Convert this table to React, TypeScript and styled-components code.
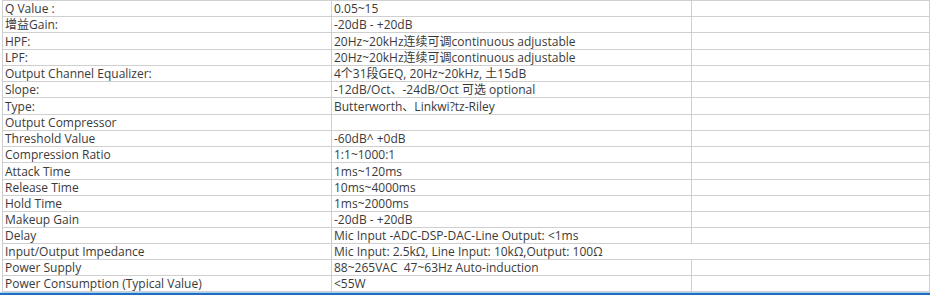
import React from "react";
import styled, { createGlobalStyle } from "styled-components";

const Global = createGlobalStyle`
  html, body { margin: 0; padding: 0; background: #fff; }
  body { font-family: "Open Sans", "Noto Sans CJK SC", sans-serif; }
`;

const Page = styled.div`
  width: 934px;
  height: 295px;
  overflow: hidden;
  background: #fff;
`;

const Sheet = styled.div`
  margin-left: 2px;
  width: 928px;
  border-left: 1px solid #cfcfcf;
  border-top: 1px solid #cfcfcf;
  box-sizing: border-box;
`;

const Row = styled.div<{ $h: number }>`
  display: grid;
  grid-template-columns: 329px 360px 238px;
  height: ${(p) => p.$h}px;
`;

const Cell = styled.div<{ $span?: number }>`
  grid-column: span ${(p) => p.$span ?? 1};
  border-right: 1px solid #cfcfcf;
  border-bottom: 1px solid #cfcfcf;
  box-sizing: border-box;
  padding: 0 0 0 2px;
  font-size: 12px;
  line-height: 14px;
  color: #3a3a3a;
  white-space: pre;
  overflow: hidden;
  display: flex;
  align-items: flex-end;
`;

const Footer = styled.div`
  width: 930px;
  height: 4px;
  box-sizing: border-box;
  border-top: 1px solid #a9d0f5;
  background: #1f6ec2;
`;

type Spec = { label: string; value: string; h: number; span?: boolean };

const rows: Spec[] = [
  { label: "Q Value :", value: "0.05~15", h: 16 },
  { label: "增益Gain:", value: "-20dB - +20dB", h: 16 },
  { label: "HPF:", value: "20Hz~20kHz连续可调continuous adjustable", h: 17 },
  { label: "LPF:", value: "20Hz~20kHz连续可调continuous adjustable", h: 16 },
  { label: "Output Channel Equalizer:", value: "4个31段GEQ, 20Hz~20kHz, 土15dB", h: 16 },
  { label: "Slope:", value: "-12dB/Oct、-24dB/Oct 可选 optional", h: 16 },
  { label: "Type:", value: "Butterworth、Linkwi?tz-Riley", h: 17 },
  { label: "Output Compressor", value: "", h: 16 },
  { label: "Threshold Value", value: "-60dB^ +0dB", h: 16 },
  { label: "Compression Ratio", value: "1:1~1000:1", h: 16 },
  { label: "Attack Time", value: "1ms~120ms", h: 17 },
  { label: "Release Time", value: "10ms~4000ms", h: 16 },
  { label: "Hold Time", value: "1ms~2000ms", h: 16 },
  { label: "Makeup Gain", value: "-20dB - +20dB", h: 16 },
  { label: "Delay", value: "Mic Input -ADC-DSP-DAC-Line Output: <1ms", h: 16 },
  {
    label: "Input/Output Impedance",
    value: "Mic Input: 2.5kΩ, Line Input: 10kΩ,Output: 100Ω",
    h: 16,
    span: true,
  },
  { label: "Power Supply", value: "88~265VAC  47~63Hz Auto-induction", h: 16 },
  { label: "Power Consumption (Typical Value)", value: "<55W", h: 16 },
];

export default function App() {
  return (
    <Page>
      <Global />
      <Sheet>
        {rows.map((r, i) => (
          <Row key={i} $h={r.h}>
            <Cell>{r.label}</Cell>
            <Cell $span={r.span ? 2 : 1}>{r.value}</Cell>
            {!r.span && <Cell />}
          </Row>
        ))}
      </Sheet>
      <Footer />
    </Page>
  );
}
